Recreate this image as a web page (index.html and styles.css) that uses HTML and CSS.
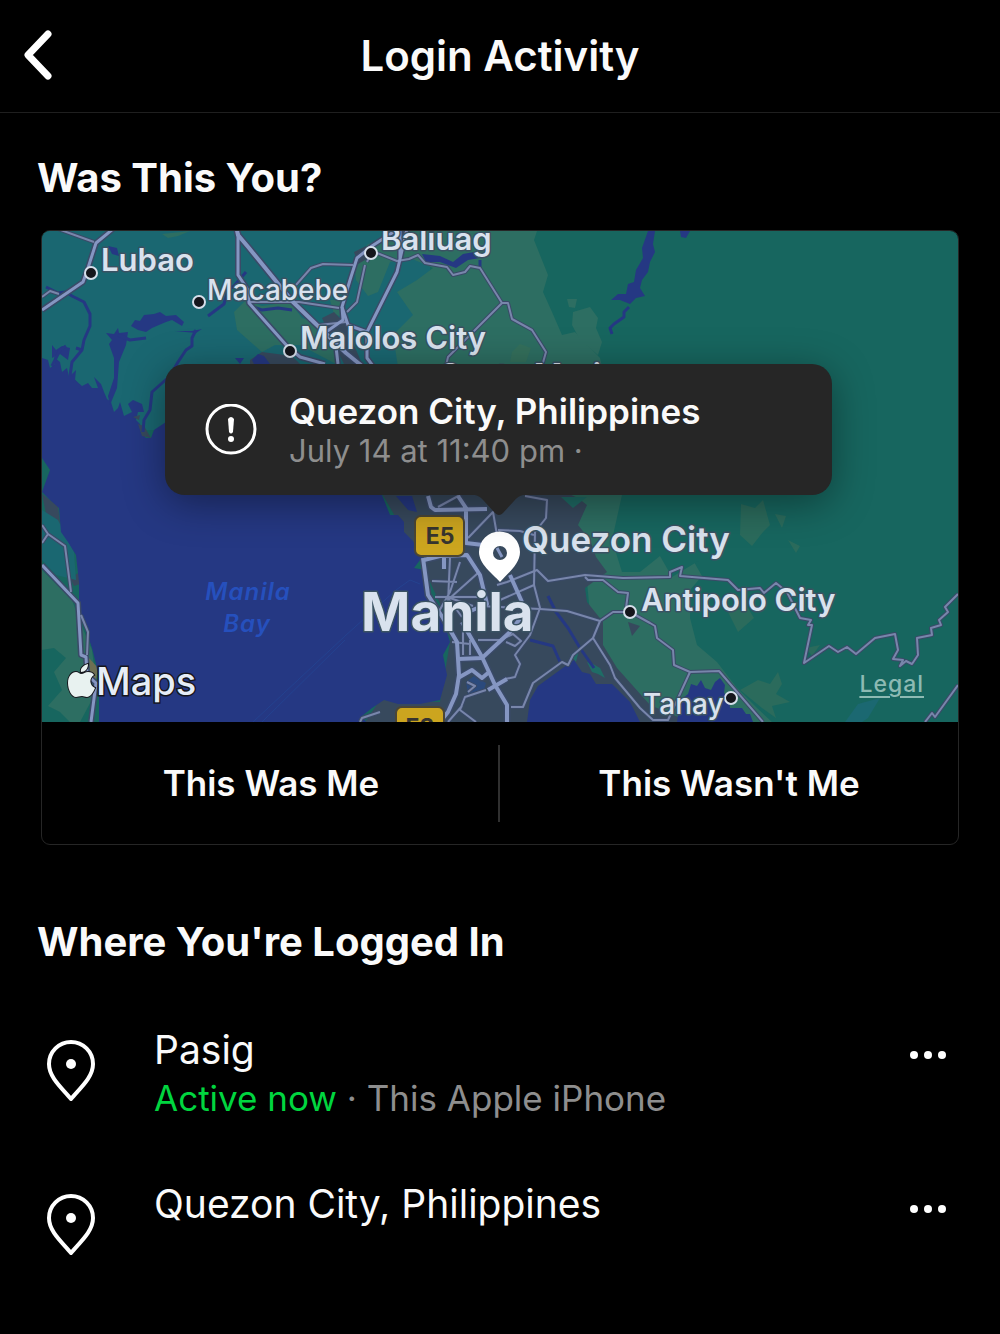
FILE: index.html
```html
<!DOCTYPE html>
<html lang="en">
<head>
  <meta charset="UTF-8">
  <meta name="viewport" content="width=device-width, initial-scale=1.0">
  <title>Login Activity</title>
  <link rel="stylesheet" href="styles.css">
</head>
<body>
<header class="topbar">
  <button class="back" type="button" aria-label="Back">
    <svg width="34" height="54" viewBox="0 0 34 54"><path d="M28 6 L8 27 L28 48"/></svg>
  </button>
  <h1>Login Activity</h1>
</header>

<main>
  <section class="check">
    <h2>Was This You?</h2>
    <div class="card">
      <div class="map">
        <svg class="map-art" viewBox="42 231 916 491">
          <defs>
            <g id="major">
              <path d="M236 226 L238 235 L249 248 L293 302 L319 327 L346 353 L362 366"/>
              <path d="M428 496 L431 507 L435 510 L487 509 M458 496 L466 508 L466 543 L483 545"/>
              <path d="M423 558 L428 595 L443 618 L457 642 L459 675 L456 694 L448 712 L440 722"/>
              <path d="M424 560 L440 556 L467 555 L480 575 L487 604 L468 612 M444 558 V569"/>
              <path d="M462 622 L482 657 L495 685 L507 705 L507 722"/>
              <path d="M458 659 L482 658 L510 632 L528 608"/>
              <path d="M458 678 L472 670 L482 678 L488 673 M488 690 L507 679 M510 575 L522 602"/>
            </g>
            <g id="middle">
              <path d="M238 233 L238 275 L248 290 L249 303 L288 347 L300 357 L325 364"/>
              <path d="M113 229 L96 243 L88 268 L83 282 L42 310"/>
              <path d="M395 231 L372 246 L357 258 L350 280 L342 307 L348 325 L367 332"/>
              <path d="M407 229 L397 272 L367 332 L367 358 L373 366 M400 229 L400 260"/>
              <path d="M342 307 L343 320 L326 332 M335 338 L338 364"/>
              <path d="M42 565 L78 603 L81 655 L86 657 L87 675 L96 683 L91 722"/>
            </g>
            <g id="minor">
              <path d="M58 229 L94 242 M42 297 L50 291 L59 294"/>
              <path d="M296 285 L311 268 L323 264 L353 265 M249 302 H299 L339 308 M319 325 L346 322"/>
              <path d="M365 265 L357 302 L347 312 M367 262 L371 253"/>
              <path d="M377 253 L397 261 L409 259 L418 255 L425 263 L447 267 L453 275 L465 272 L470 266 L480 268 L502 303 L508 303 L512 319 L532 330 L546 352 L542 366"/>
              <path d="M502 303 L448 357 L446 366"/>
              <path d="M42 525 L48 534 L65 546 L71 592 M48 534 L42 543 M81 615 L88 632 L87 655"/>
              <path d="M468 538 L493 512 L497 535 M525 496 L547 500 L546 518 L535 532 L534 585 L540 608 L530 635 L515 655 L520 664 L515 677 L505 679"/>
              <path d="M438 507 L460 495 M498 530 L520 531 L534 535"/>
              <path d="M450 558 L448 602 M460 562 L450 592 L438 613 M432 581 L457 582 M435 597 L487 597"/>
              <path d="M478 573 L450 598 L473 606 M448 598 L462 617 M500 600 L534 585 M480 606 L540 609"/>
              <path d="M463 622 V655 M452 642 L470 644 M470 640 V655 M478 640 H500 L513 634 L521 641 L515 646 L506 642"/>
              <path d="M497 585 L507 582 L537 570 L548 581 L585 575 L623 578 L670 577 L670 572 L682 567 L680 576 L728 580 L738 590 L760 588 L764 593 L776 583 L787 592 L800 618 L811 620 L808 625 L812 625 L804 663 L829 646 L838 652 L847 647 L856 654 L875 638 L895 634 L898 650 L893 659 L903 660 L900 666 L906 661 L912 664 L918 655 L917 638 L932 635 L931 628 L941 625 L939 620 L948 612 L945 607 L958 594"/>
              <path d="M585 577 L588 580 L603 580 L618 592 L628 593 L626 608"/>
              <path d="M540 609 L567 611 L600 621 L613 612 L630 612 L650 623 L655 626 L657 638 L673 650 L674 665 L690 672 L719 671 L763 722"/>
              <path d="M690 672 L668 720 L653 720 L640 708 L615 678 L610 665 L593 638 L600 621"/>
              <path d="M593 638 L573 655 L568 665 L562 662 L533 683 L523 707 L511 707"/>
              <path d="M925 722 L932 713 L935 717 L958 685"/>
              <path d="M486 690 L465 697 L460 710 L476 722 M448 722 L462 706 M467 682 L475 686 L468 692 M360 722 L362 718 L380 712"/>
            </g>
          </defs>

          <!-- land -->
          <rect x="42" y="231" width="916" height="491" fill="#17665f"/>
          <path fill="#1a6771" d="M42 231 H430 V400 H380 L300 430 H42 Z"/>
          <path fill="#2d6e62" d="M400 231 H537 L534 240 L548 275 L543 292 L552 312 L562 335 L575 332 L600 358 L605 380 H400 L393 335 L413 315 L397 292 L417 280 L433 268 L410 258 L390 262 L378 292 L368 296 L356 280 L354 262 L368 244 L385 240 Z"/>
          <path fill="#2d6e62" d="M237 330 L234 312 L246 300 L262 306 L290 302 L302 318 L330 326 L340 340 L336 364 L300 345 L275 345 L262 352 Z"/>
          <path fill="#2d6e62" d="M162 234 L190 231 L178 236 L168 238 Z M330 300 L345 300 V318 L334 314 Z"/>
          <path fill="#2d6e62" d="M573 312 L590 307 L598 318 L596 328 L602 342 L598 355 L580 340 L572 325 Z M567 299 L577 299 L575 308 L569 307 Z"/>
          <path fill="#34705c" d="M512 352 L520 344 L531 348 L526 362 H510 Z"/>
          <!-- left shore -->
          <path fill="#17665f" d="M42 492 L59 508 L79 582 L99 682 V722 H42 Z"/>
          <path fill="#37495d" d="M42 494 L58 506 L60 524 L46 514 Z M70 578 L80 572 V584 L74 586 Z"/>
          <path fill="#1a6771" d="M42 510 L58 520 L74 552 L76 580 L56 575 L42 560 Z"/>
          <path fill="#2d6e62" d="M42 570 L72 600 L80 622 L92 650 L97 690 L80 722 H70 L60 712 L48 706 L62 690 L54 672 L66 658 L54 648 L42 650 Z"/>
          <path fill="#6d7052" d="M89 658 L98 668 L96 681 L90 678 Z"/>
          <!-- city and suburbs -->
          <path fill="#2d6e62" d="M545 490 H665 L652 520 L668 545 L690 555 L702 576 L690 590 L690 618 L697 645 L717 662 L737 688 L757 708 L772 722 H600 L585 560 Z"/>
          <path fill="#17665f" d="M622 495 H700 V560 L672 577 L660 556 L640 572 L622 572 L612 540 Z"/>
          <path fill="#37495d" d="M380 490 H560 L578 498 L587 505 L578 525 L590 540 L596 557 L607 572 L585 588 L587 602 L603 622 L603 645 L617 668 L650 705 L690 722 H365 L380 700 L440 702 L452 630 L420 560 Z"/>
          <path fill="#1f6c66" d="M561 497 H587 L573 508 Z M570 655 L579 650 L576 662 Z M587 662 L593 664 L600 668 L605 678 L598 674 L592 672 Z"/>
          <path fill="#37495d" d="M628 622 L640 626 L632 636 Z M250 360 L262 352 L292 356 L300 364 H250 Z M354 252 L366 246 L372 256 L358 264 Z M322 318 L334 312 L344 322 L352 340 L362 364 H344 L330 336 Z"/>
          <!-- patches on the hills -->
          <path fill="#2b6b5c" d="M741 504 L755 508 L763 500 L770 525 L763 532 L752 546 L740 535 Z M775 514 L786 516 L782 528 Z M788 540 L800 546 L796 553 Z"/>
          <path fill="#2b6b5c" d="M728 612 L748 608 L754 618 L738 632 Z M740 690 L758 680 L770 684 L778 672 L782 684 L776 694 L790 702 L772 706 L776 718 L762 708 Z M806 648 L820 645 L812 656 Z"/>
          <path fill="#1b6871" d="M845 722 L858 704 L880 698 L868 718 L862 722 Z"/>

          <!-- water -->
          <path fill="#253883" d="M42 358 L48 360 L50 368 L55 364 L54 357 L60 362 L62 372 L67 368 L69 377 L76 370 L75 380 L82 386 L88 383 L92 388 L98 388 L94 377 L101 384 L104 392 L107 399 L111 402 L114 412 L118 408 L120 402 L124 416 L128 414 L132 412 L128 404 L133 400 L142 404 L144 412 L138 412 L136 420 L140 424 L141 433 L146 438 L151 438 L154 430 L166 422 V480 H350 L380 490 L390 515 L398 515 L404 522 L404 532 L412 540 L423 556 L414 568 L425 570 L425 580 L428 597 L443 618 L450 642 L443 655 L447 675 L440 700 L420 704 L398 704 L384 700 L372 708 L362 716 L366 722 H99 L99 682 L96 664 L92 648 L86 630 L79 608 L79 582 L76 555 L68 542 L61 532 L59 508 L50 500 L42 492 L50 470 L42 458 Z"/>
          <path fill="#253883" d="M396 496 H412 L417 512 L408 510 Z"/>
          <path fill="#37495d" d="M133 417 L140 415 L139 420 Z M138 424 L144 426 L151 438 L142 436 Z"/>
          <path fill="#253883" d="M527 722 L530 700 L538 686 L560 670 L574 660 L582 672 L590 674 L596 684 L612 684 L630 702 L640 722 Z M677 722 L679 708 L683 698 L688 694 L691 684 L697 686 L701 680 L705 688 L711 690 L715 682 L720 678 L725 685 L724 693 L729 697 L730 708 L742 708 L746 714 L750 714 L753 722 Z"/>
          <path fill="#253883" d="M106 333 L114 334 L118 328 L119 333 L128 332 L126 345 L119 362 L117 388 L110 405 L108 396 L114 378 L114 358 L109 344 L112 340 Z M131 326 L135 320 L140 321 L144 315 L154 314 L160 312 L166 316 L176 315 L184 322 L182 326 L172 320 L166 322 L152 328 L146 332 L138 330 Z M108 246 L117 248 L119 256 L112 254 Z M175 331 L192 331 L202 329 L196 333 Z"/>
          <path fill="#253883" d="M52 345 L56 350 L62 346 L70 348 L68 360 L60 354 L52 358 Z M235 358 L244 358 L240 364 Z M252 360 L258 354 L264 356 L270 364 H254 Z"/>
          <path fill="#253883" d="M422 254 L440 256 L453 262 L463 254 L474 252 L480 258 L468 260 L456 268 L440 262 L426 262 Z"/>
          <path fill="#253883" d="M648 231 H655 L653 244 L655 252 L650 262 L648 272 L642 280 L640 288 L645 296 L636 298 L630 304 L620 300 L611 300 L618 294 L626 294 L628 284 L634 282 L636 270 L643 258 L642 248 Z M680 231 H690 L686 238 L681 237 Z"/>
          <path fill="#2b4a7c" d="M466 682 L474 676 L486 683 L484 690 L468 694 Z"/>
          <g class="river">
            <path d="M46 287 L58 293 L66 292 L72 296 L84 302 L90 314 L90 326 L84 340 L82 350 L72 362 L70 376 L80 388"/>
            <path d="M196 330 L192 338 L192 346 L186 350 L178 362 L170 376 L152 392 L150 410 L144 420 L143 432"/>
            <path d="M246 272 L234 286 L228 290 L224 304 L216 310 L208 316 M250 306 L262 310 L278 308 L292 310 M118 335 L130 340 L146 338"/>
            <path d="M52 366 L60 350 L66 346 M82 350 L76 348 M629 307 L624 312 L624 317 L614 324 L610 328 L612 334"/>
            <path d="M530 640 L553 646 L560 662 M548 596 L556 612 L568 628 L580 648 L594 668 M480 260 V268"/>
          </g>
          <path class="ferry" d="M253 722 L345 636 L396 590 L410 580 L420 584 M262 722 L345 640"/>

          <!-- roads -->
          <use href="#minor" class="case thin"/>
          <use href="#middle" class="case mid"/>
          <use href="#major" class="case wide"/>
          <use href="#minor" class="road thin"/>
          <use href="#middle" class="road mid"/>
          <use href="#major" class="road wide"/>

          <!-- road numbers -->
          <g class="shield">
            <rect x="415" y="516" width="49" height="40" rx="6"/>
            <rect x="396" y="707" width="48" height="40" rx="6"/>
            <text x="440" y="544">E5</text>
            <text x="420" y="735">E3</text>
          </g>

          <!-- towns -->
          <g class="dot">
            <circle cx="91" cy="273" r="6"/>
            <circle cx="199" cy="302" r="6"/>
            <circle cx="290" cy="351" r="6"/>
            <circle cx="371" cy="253" r="6"/>
            <circle cx="630" cy="612" r="6"/>
            <circle cx="731" cy="698" r="6"/>
          </g>
          <g class="town">
            <text x="101" y="271">Lubao</text>
            <text x="381" y="250">Baliuag</text>
            <text x="300" y="349">Malolos City</text>
            <text x="440" y="386">Santa Maria</text>
            <text x="641" y="611">Antipolo City</text>
          </g>
          <g class="town small">
            <text x="207" y="300">Macabebe</text>
            <text x="643" y="714">Tanay</text>
          </g>
          <text class="town large" x="522" y="552">Quezon City</text>
          <text class="town capital" x="361" y="631">Manila</text>
          <g class="bay">
            <text x="248" y="600">Manila</text>
            <text x="247" y="632">Bay</text>
          </g>

          <path class="marker" fill-rule="evenodd" d="M500 582 C492 573 479 564 479 552 A20.500 20.500 0 0 1 520 552 C520 564 508 573 500 582 Z M500 546 A7 7 0 1 0 500 560 A7 7 0 1 0 500 546 Z"/>
          <path class="road mid" d="M497 548 L502 557"/>
        </svg>

        <div class="callout">
          <svg class="alert" width="52" height="52" viewBox="0 0 52 52">
            <circle cx="26" cy="25" r="24"/>
            <path d="M23 15 Q26 11 29 15 L28 28 Q26 31 24 28 Z"/>
            <circle class="point" cx="26" cy="35" r="3"/>
          </svg>
          <div>
            <p class="place">Quezon City, Philippines</p>
            <p class="when">July 14 at 11:40 pm ·</p>
          </div>
          <svg class="tail" width="48" height="22" viewBox="0 0 48 22"><path d="M0 0 Q5 1 9 6 L20 18 Q24 22 28 18 L39 6 Q43 1 48 0 Z"/></svg>
        </div>

        <div class="maps-brand">
          <svg width="29" height="34" viewBox="0 0 29 34">
            <path d="M14 10 C17 10 18 8 21 8 C24 8 26 9 27 11 C22 14 22 21 28 24 C26 29 23 33 20 33 C18 33 17 32 15 32 C12 32 11 33 9 33 C5 33 1 26 1 19 C1 12 5 8 9 8 C11 8 13 10 14 10 Z M14 8 C13 4 17 1 21 0 C21 5 18 8 14 8 Z"/>
          </svg>
          <span>Maps</span>
        </div>
        <a class="legal" href="#">Legal</a>
      </div>
      <div class="answers">
        <button type="button">This Was Me</button>
        <button type="button">This Wasn't Me</button>
      </div>
    </div>
  </section>

  <section class="logins">
    <h2>Where You're Logged In</h2>
    <ul>
      <li>
        <svg class="pin" width="50" height="62" viewBox="0 0 50 62">
          <path d="M25 59 C17 49 3 38 3 24 A22 22 0 0 1 47 24 C47 38 33 49 25 59 Z"/>
          <circle cx="25" cy="24" r="5"/>
        </svg>
        <div class="info">
          <p class="name">Pasig</p>
          <p class="device"><span class="active">Active now</span> · This Apple iPhone</p>
        </div>
        <button class="more" type="button" aria-label="More options for Pasig">
          <svg width="36" height="8" viewBox="0 0 36 8"><circle cx="4" cy="4" r="4"/><circle cx="18" cy="4" r="4"/><circle cx="32" cy="4" r="4"/></svg>
        </button>
      </li>
      <li>
        <svg class="pin" width="50" height="62" viewBox="0 0 50 62">
          <path d="M25 59 C17 49 3 38 3 24 A22 22 0 0 1 47 24 C47 38 33 49 25 59 Z"/>
          <circle cx="25" cy="24" r="5"/>
        </svg>
        <div class="info">
          <p class="name">Quezon City, Philippines</p>
        </div>
        <button class="more" type="button" aria-label="More options for Quezon City">
          <svg width="36" height="8" viewBox="0 0 36 8"><circle cx="4" cy="4" r="4"/><circle cx="18" cy="4" r="4"/><circle cx="32" cy="4" r="4"/></svg>
        </button>
      </li>
    </ul>
  </section>
</main>
</body>
</html>
```
FILE: styles.css
```css
* { box-sizing: border-box; margin: 0; padding: 0; }

body {
  font-family: Inter, "Helvetica Neue", Arial, sans-serif;
  background: #000;
  color: #fafafa;
}

svg {
  display: block;
}

button {
  font: inherit;
  color: inherit;
  background: none;
  border: none;
  cursor: pointer;
}

.topbar {
  display: grid;
  grid-template-columns: 60px 1fr 60px;
  align-items: center;
  height: 113px;
  padding: 0 20px 2px;
  border-bottom: 1px solid #1f1f1f;
}

.back path {
  fill: none;
  stroke: #fff;
  stroke-width: 7;
  stroke-linecap: round;
  stroke-linejoin: round;
}

h1 {
  font-size: 42px;
  font-weight: 600;
  text-align: center;
}

h2 {
  font-size: 40px;
  font-weight: 700;
  line-height: 48px;
  padding-left: 37px;
}

.check {
  padding-top: 41px;
}

.card {
  margin: 28px 41px 0;
  border: 1px solid #262626;
  border-radius: 9px;
  overflow: hidden;
}

.map {
  position: relative;
}

.map-art {
  width: 100%;
  height: auto;
}

.river {
  fill: none;
  stroke: #253883;
  stroke-width: 3;
  stroke-linejoin: round;
}

.ferry {
  fill: none;
  stroke: #24428f;
  stroke-width: 1;
}

.case, .road {
  fill: none;
  stroke-linejoin: round;
}

.case { stroke: #3a4a68; }
.case.thin { stroke-width: 4; }
.case.mid { stroke-width: 6; }
.case.wide { stroke-width: 7; }

.road { stroke: #8596c2; }
.road.thin { stroke: #7886ab; stroke-width: 2; }
.road.mid { stroke-width: 3; }
.road.wide { stroke-width: 4; }

.shield rect {
  fill: #cca51f;
  stroke: #4b4636;
  stroke-width: 2;
}

.shield text {
  font-size: 23px;
  font-weight: 700;
  text-anchor: middle;
  fill: #37352f;
}

.dot circle {
  fill: #15161c;
  stroke: #d5deea;
  stroke-width: 2;
}

.town {
  font-size: 31px;
  font-weight: 600;
  fill: #d9e2ee;
  stroke: #3a5263;
  stroke-width: 3;
  stroke-linejoin: round;
  paint-order: stroke;
}

.town.small {
  font-size: 28px;
  font-weight: 500;
}

.town.large {
  font-size: 35px;
}

.town.capital {
  font-size: 53px;
  font-weight: 700;
}

.bay text {
  font-size: 24px;
  font-weight: 600;
  font-style: italic;
  letter-spacing: 1px;
  text-anchor: middle;
  fill: #2650bd;
}

.marker {
  fill: #fff;
}

.callout {
  position: absolute;
  top: 133px;
  left: 123px;
  right: 126px;
  display: flex;
  align-items: center;
  gap: 32px;
  height: 131px;
  padding-left: 40px;
  background: #262626;
  border-radius: 20px;
  box-shadow: 0 8px 40px rgba(0,0,0,0.4);
}

.alert circle {
  fill: none;
  stroke: #fff;
  stroke-width: 3;
}

.alert path, .alert .point {
  fill: #fff;
  stroke: none;
}

.place {
  font-size: 35px;
  font-weight: 600;
  line-height: 42px;
}

.when {
  font-size: 31px;
  line-height: 38px;
  color: #8e8e8e;
}

.tail {
  position: absolute;
  top: 100%;
  left: 50%;
  margin-left: -24px;
  fill: #262626;
}

.maps-brand {
  position: absolute;
  left: 25px;
  bottom: 19px;
  display: flex;
  align-items: center;
  font-size: 38px;
  font-weight: 500;
  line-height: 44px;
  color: #e6edf6;
  paint-order: stroke;
  -webkit-text-stroke: 3px #15161c;
}

.maps-brand svg {
  fill: #e8f2f0;
  overflow: visible;
  stroke: #15161c;
  stroke-width: 2;
  paint-order: stroke;
}

.legal {
  position: absolute;
  right: 34px;
  bottom: 24px;
  font-size: 23px;
  font-weight: 500;
  line-height: 28px;
  letter-spacing: 1px;
  color: #8dbab3;
  text-underline-offset: 4px;
}

.answers {
  display: flex;
  height: 122px;
}

.answers button {
  flex: 1;
  font-size: 35px;
  font-weight: 600;
}

.answers button:first-child {
  background: linear-gradient(#303030, #303030) right center / 2px 77px no-repeat;
}

.logins {
  padding-top: 73px;
}

.logins ul {
  list-style: none;
  padding: 60px 54px 0 46px;
}

.logins li {
  display: flex;
  align-items: flex-start;
  height: 154px;
}

.pin {
  flex: none;
  margin-top: 14px;
}

.pin path {
  fill: none;
  stroke: #fff;
  stroke-width: 4;
  stroke-linejoin: round;
}

.pin circle {
  fill: #fff;
}

.info {
  flex: 1;
  padding-left: 58px;
}

.name {
  font-size: 39px;
  line-height: 48px;
}

.device {
  font-size: 35px;
  line-height: 48px;
  color: #8e8e8e;
}

.active {
  color: #00d53f;
}

.more {
  padding: 25px 0;
}

.more svg {
  fill: #fff;
}
```
